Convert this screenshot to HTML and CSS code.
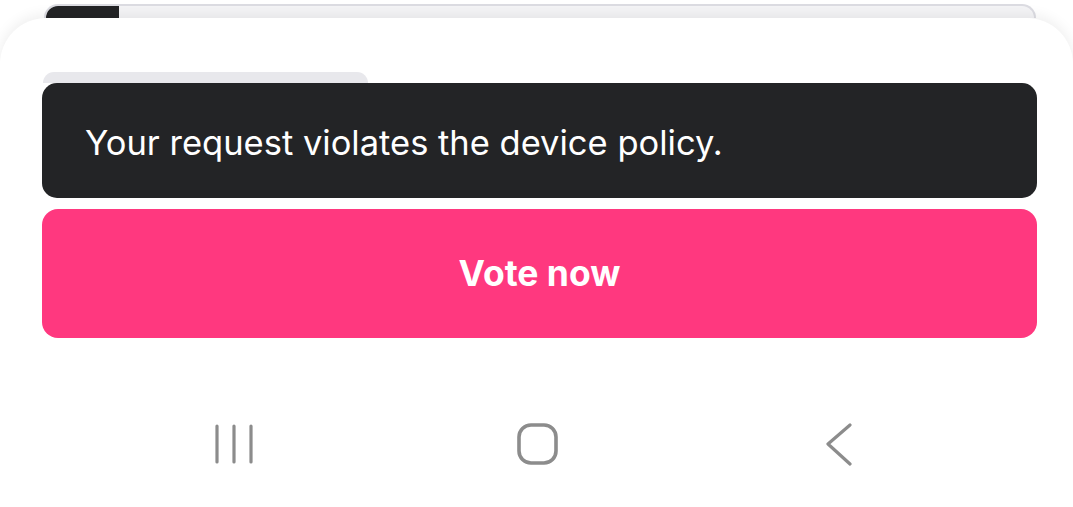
FILE: index.html
```html
<!DOCTYPE html>
<html>
<head>
<meta charset="utf-8">
<link rel="stylesheet" href="styles.css">
</head>
<body>
<div class="topbar"><div class="topbar-fill"></div></div>
<div class="sheet">
  <div class="chip"></div>
  <div class="toast">Your request violates the device policy.</div>
  <button class="vote">Vote now</button>
  <nav class="navbar">
    <div class="navcell">
      <svg width="40" height="44" viewBox="0 0 40 44"><g stroke="#8c8c8c" stroke-width="3.2" stroke-linecap="round"><line x1="3" y1="4" x2="3" y2="40"/><line x1="20" y1="4" x2="20" y2="40"/><line x1="37" y1="4" x2="37" y2="40"/></g></svg>
    </div>
    <div class="navcell">
      <svg width="44" height="44" viewBox="0 0 44 44"><rect x="4" y="3" width="37" height="38" rx="12" fill="none" stroke="#8c8c8c" stroke-width="3.6"/></svg>
    </div>
    <div class="navcell">
      <svg width="30" height="44" viewBox="0 0 30 44"><polyline points="25,3 3,22 25,42" fill="none" stroke="#8c8c8c" stroke-width="3.2" stroke-linecap="round" stroke-linejoin="round"/></svg>
    </div>
  </nav>
</div>
</body>
</html>
```
FILE: styles.css
```css
html, body {
  margin: 0;
  padding: 0;
  background: #ffffff;
  font-family: Inter, "Noto Sans", sans-serif;
}
body {
  width: 1073px;
  height: 507px;
  overflow: hidden;
  padding-top: 4px;
  box-sizing: border-box;
}
.topbar {
  margin: 0 37px 0 44px;
  height: 14px;
  border: 2px solid #dcdce2;
  border-bottom: none;
  border-radius: 16px 16px 0 0;
  background: #f4f4f6;
  overflow: hidden;
  box-sizing: border-box;
}
.topbar-fill {
  width: 73px;
  height: 100%;
  background: #232426;
}
.sheet {
  background: #ffffff;
  border-radius: 46px 46px 0 0;
  box-shadow: 0 -3px 14px rgba(0, 0, 0, 0.07);
  padding: 54px 36px 0 42px;
  height: 489px;
  box-sizing: border-box;
  display: flex;
  flex-direction: column;
}
.chip {
  width: 325px;
  height: 11px;
  margin-left: 1px;
  background: #e8e8ec;
  border-radius: 14px 14px 0 0;
}
.toast {
  height: 115px;
  background: #232426;
  border-radius: 15px;
  color: #ffffff;
  font-size: 34.5px;
  display: flex;
  align-items: center;
  padding-left: 43px;
  box-sizing: border-box;
  padding-top: 4px;
}
.vote {
  margin-top: 11px;
  height: 129px;
  border: none;
  border-radius: 16px;
  background: #ff387f;
  color: #ffffff;
  font-family: Inter, "Noto Sans", sans-serif;
  font-size: 35.5px;
  font-weight: 700;
  padding: 0;
}
.navbar {
  margin-top: 58px;
  margin-left: -42px;
  margin-right: -36px;
  display: flex;
  justify-content: center;
  height: 100px;
}
.navcell {
  width: 303px;
  display: flex;
  justify-content: center;
  padding-top: 26px;
  box-sizing: border-box;
}
```
